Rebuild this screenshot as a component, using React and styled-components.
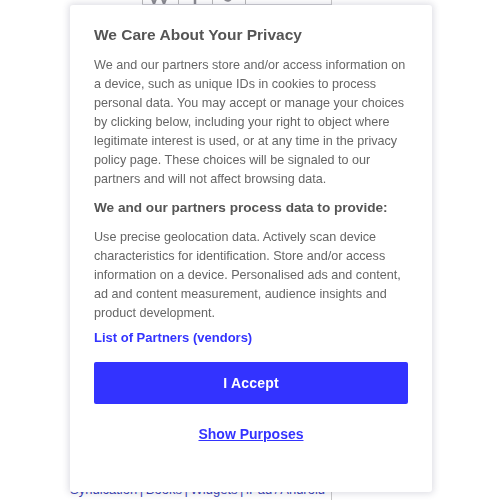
import React from "react";
import styled, { createGlobalStyle } from "styled-components";

const Global = createGlobalStyle`
  html, body { margin: 0; padding: 0; background: #fff; }
  body { font-family: "Liberation Sans", Arial, sans-serif; width: 500px; height: 500px; overflow: hidden; }
`;

const Page = styled.div`
  width: 500px;
  height: 500px;
  display: grid;
  grid-template-columns: 332px 1fr;
`;

const MainCol = styled.div`
  border-right: 1px solid #c8c8c8;
  display: flex;
  flex-direction: column;
  justify-content: space-between;
`;

const Header = styled.div`
  margin-left: 142px;
  height: 4px;
  display: flex;
  border-bottom: 1px solid #cfcfd4;
  overflow: hidden;
`;

const LogoCell = styled.div`
  width: ${(p) => p.$w}px;
  border-left: 1px solid #b8b8b8;
  display: flex;
  align-items: flex-end;
  justify-content: center;
`;

const Footer = styled.div`
  padding: 0 0 3px 70px;
  font-size: 13px;
  line-height: 14px;
  word-spacing: -1px;
  color: #3a3fb5;
  white-space: nowrap;
`;

const Modal = styled.div`
  position: fixed;
  left: 70px;
  top: 5px;
  width: 362px;
  height: 487px;
  box-sizing: border-box;
  background: #fff;
  border-radius: 3px;
  box-shadow: 0 0 6px 2px rgba(60, 60, 100, 0.16);
  padding: 20px 24px 0 24px;
  display: flex;
  flex-direction: column;
  color: #666;
`;

const Title = styled.h2`
  margin: 0 0 11px;
  font-size: 15.5px;
  line-height: 20px;
  font-weight: 700;
  color: #555;
`;

const Para = styled.p`
  margin: 0 0 ${(p) => p.$mb || 0}px;
  font-size: 12.6px;
  line-height: 19px;
  color: #666;
`;

const SubTitle = styled.h3`
  margin: 0 0 11px;
  font-size: 13.6px;
  line-height: 19px;
  font-weight: 700;
  color: #555;
`;

const PartnersLink = styled.a`
  display: block;
  margin-top: 5px;
  font-size: 13px;
  line-height: 19px;
  font-weight: 700;
  color: #3333ff;
  text-decoration: none;
`;

const AcceptButton = styled.button`
  margin-top: 15px;
  height: 42px;
  width: 100%;
  border: none;
  border-radius: 2px;
  background: #3333ff;
  color: #fff;
  font-family: "Liberation Sans", Arial, sans-serif;
  font-size: 14px;
  font-weight: 700;
  letter-spacing: 0.2px;
`;

const PurposesLink = styled.a`
  align-self: center;
  margin-top: 21px;
  font-size: 14px;
  line-height: 19px;
  font-weight: 700;
  color: #3333ff;
  text-decoration: underline;
`;

function LogoMark({ kind }) {
  return (
    <svg width="30" height="4" viewBox="0 0 30 4" aria-hidden="true">
      {kind === "v" && (
        <g stroke="#8a8a90" strokeWidth="2.2" fill="none">
          <path d="M5 -4 L8 4 L11 -4" />
          <path d="M15 -4 L18 4 L21 -4" />
        </g>
      )}
      {kind === "i" && <path d="M14 -4 V4" stroke="#8a8a90" strokeWidth="2.5" />}
      {kind === "c" && <path d="M10 -2 Q14 4 19 -4" stroke="#8a8a90" strokeWidth="2.5" fill="none" />}
    </svg>
  );
}

export default function App() {
  return (
    <>
      <Global />
      <Page>
        <MainCol>
          <Header>
            <LogoCell $w={36}><LogoMark kind="v" /></LogoCell>
            <LogoCell $w={34}><LogoMark kind="i" /></LogoCell>
            <LogoCell $w={33}><LogoMark kind="c" /></LogoCell>
            <LogoCell $w={87} />
          </Header>
          <Footer>Syndication | Books | Widgets | iPad / Android</Footer>
        </MainCol>
        <div />
      </Page>
      <Modal role="dialog">
        <Title>We Care About Your Privacy</Title>
        <Para $mb={9}>
          We and our partners store and/or access information on a device, such as unique IDs in cookies to process
          personal data. You may accept or manage your choices by clicking below, including your right to object where
          legitimate interest is used, or at any time in the privacy policy page. These choices will be signaled to our
          partners and will not affect browsing data.
        </Para>
        <SubTitle>We and our partners process data to provide:</SubTitle>
        <Para>
          Use precise geolocation data. Actively scan device characteristics for identification. Store and/or access
          information on a device. Personalised ads and content, ad and content measurement, audience insights and
          product development.
        </Para>
        <PartnersLink href="#">List of Partners (vendors)</PartnersLink>
        <AcceptButton>I Accept</AcceptButton>
        <PurposesLink href="#">Show Purposes</PurposesLink>
      </Modal>
    </>
  );
}
